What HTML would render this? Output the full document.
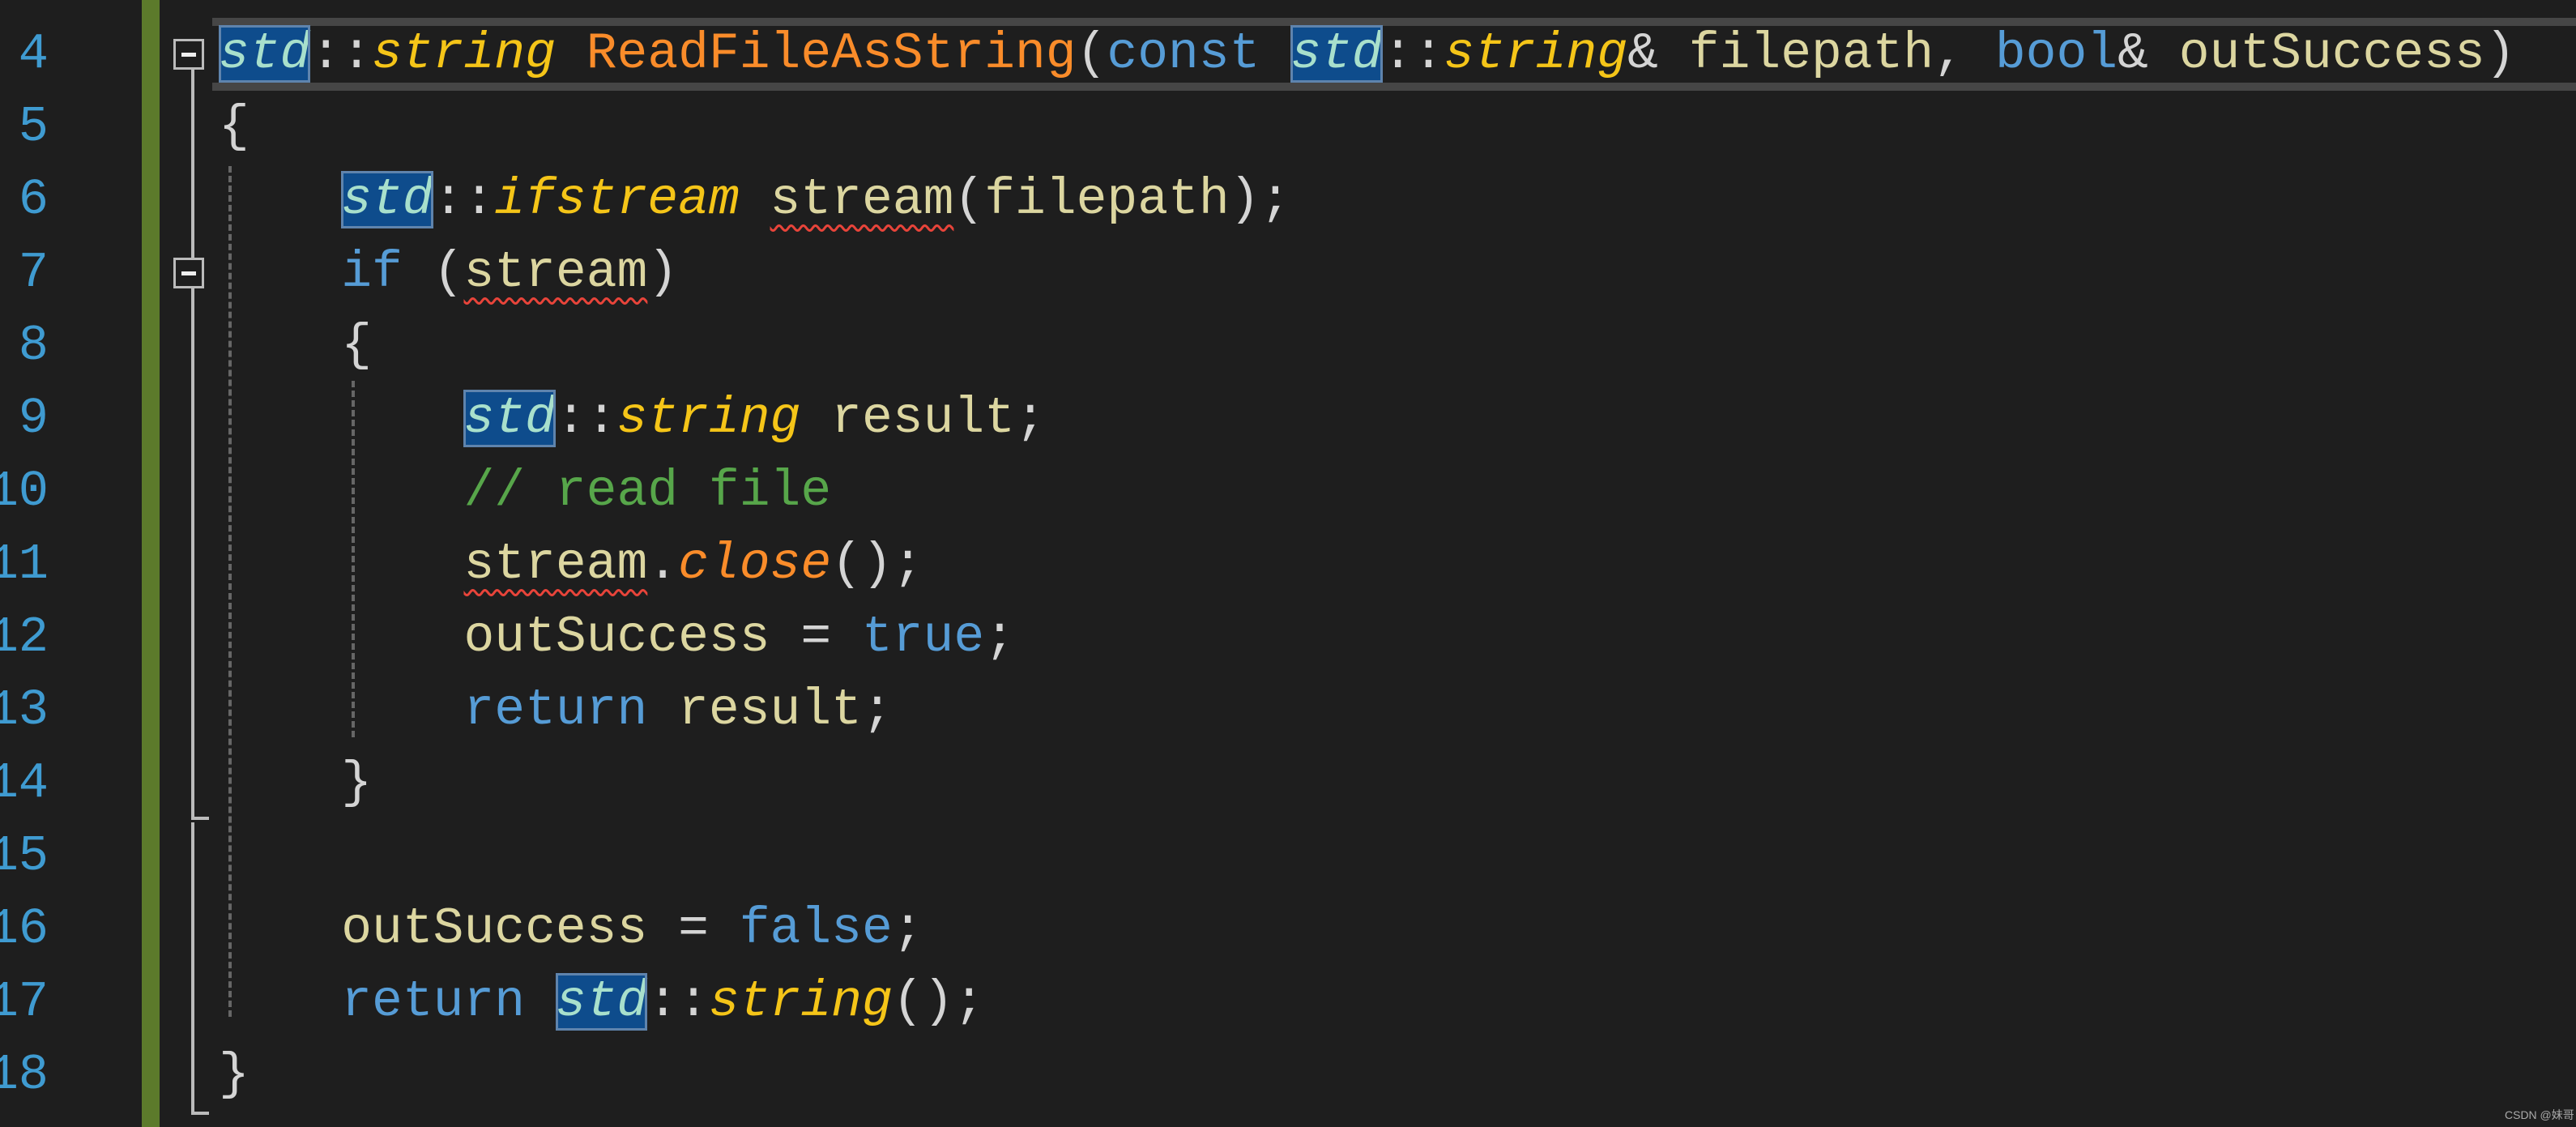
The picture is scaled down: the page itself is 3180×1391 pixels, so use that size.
<!DOCTYPE html>
<html><head><meta charset="utf-8"><style>
html,body{margin:0;padding:0;width:3180px;height:1391px;background:#1e1e1e;overflow:hidden}
.ln{position:absolute;left:-140px;top:22px;width:200px;text-align:right;font:62px/90px "Liberation Mono",monospace;color:#3f9bd1;white-space:pre}
.code{position:absolute;left:270px;top:22px;font:63px/90px "Liberation Mono",monospace;color:#d4d4d4;white-space:pre;margin:0}
.k{color:#569cd6}.t{color:#f5c518;font-style:italic}.f{color:#fa8c2a}.v{color:#dcd6a0}.c{color:#57a64a}.fi{color:#fa8c2a;font-style:italic}
.s{color:#a8e0cc;font-style:italic;background:#0e4c8c;outline:3px solid #5f84ad;outline-offset:-3px}
.w{text-decoration:underline wavy #e8443a;text-decoration-thickness:3px;text-underline-offset:14px}
.box{position:absolute;width:38px;height:38px;border:3px solid #bbb;background:#1e1e1e;box-sizing:border-box}
.box:after{content:"";position:absolute;left:7px;top:14px;width:18px;height:5px;background:#eee}
</style></head><body>
<div style="position:absolute;left:262px;top:22px;width:2918px;height:90px;border-top:10px solid #464646;border-bottom:10px solid #464646;box-sizing:border-box"></div>
<div style="position:absolute;left:175px;top:0;width:22px;height:1391px;background:#5c7a2b"></div>
<div style="position:absolute;left:236px;top:85px;width:4px;height:925px;background:#bbb"></div>
<div style="position:absolute;left:236px;top:1008px;width:22px;height:4px;background:#bbb"></div>
<div style="position:absolute;left:236px;top:1015px;width:4px;height:360px;background:#bbb"></div>
<div style="position:absolute;left:236px;top:1372px;width:22px;height:4px;background:#bbb"></div>
<div style="position:absolute;left:282px;top:205px;width:0;height:1050px;border-left:4px dashed #666"></div>
<div style="position:absolute;left:434px;top:470px;width:0;height:440px;border-left:4px dashed #666"></div>
<div class="box" style="left:214px;top:48px"></div>
<div class="box" style="left:214px;top:318px"></div>
<div class="ln">4
5
6
7
8
9
10
11
12
13
14
15
16
17
18</div>
<pre class="code"><span class="s">std</span>::<span class="t">string</span> <span class="f">ReadFileAsString</span>(<span class="k">const</span> <span class="s">std</span>::<span class="t">string</span>&amp; <span class="v">filepath</span>, <span class="k">bool</span>&amp; <span class="v">outSuccess</span>)
{
    <span class="s">std</span>::<span class="t">ifstream</span> <span class="v w">stream</span>(<span class="v">filepath</span>);
    <span class="k">if</span> (<span class="v w">stream</span>)
    {
        <span class="s">std</span>::<span class="t">string</span> <span class="v">result</span>;
        <span class="c">// read file</span>
        <span class="v w">stream</span>.<span class="fi">close</span>();
        <span class="v">outSuccess</span> = <span class="k">true</span>;
        <span class="k">return</span> <span class="v">result</span>;
    }

    <span class="v">outSuccess</span> = <span class="k">false</span>;
    <span class="k">return</span> <span class="s">std</span>::<span class="t">string</span>();
}</pre>
<div style="position:absolute;left:3092px;top:1366px;font:14px 'Liberation Sans','Noto Sans CJK SC',sans-serif;color:#aaa;white-space:nowrap">CSDN @妹哥</div>
</body></html>
